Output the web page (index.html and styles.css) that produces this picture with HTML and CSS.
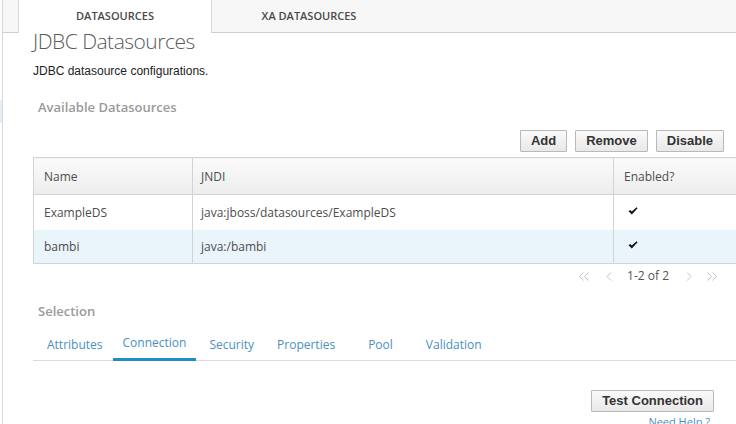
FILE: index.html
```html
<!DOCTYPE html>
<html>
<head>
<meta charset="utf-8">
<link rel="stylesheet" href="styles.css">
</head>
<body>
<div class="page">
  <div class="side-patch"></div>
  <div class="tabstrip">
    <div class="tab-stub"></div>
    <div class="tab active">DATASOURCES</div>
    <div class="tab">XA DATASOURCES</div>
  </div>
  <div class="content">
    <h1 class="title">JDBC Datasources</h1>
    <p class="desc">JDBC datasource configurations.</p>
    <h2 class="section">Available Datasources</h2>
    <div class="toolbar">
      <button class="btn">Add</button>
      <button class="btn">Remove</button>
      <button class="btn">Disable</button>
    </div>
    <table class="grid">
      <colgroup>
        <col class="c-name"><col class="c-jndi"><col class="c-enabled">
      </colgroup>
      <thead>
        <tr><th>Name</th><th>JNDI</th><th>Enabled?</th></tr>
      </thead>
      <tbody>
        <tr><td>ExampleDS</td><td>java:jboss/datasources/ExampleDS</td><td><svg class="check" width="10" height="8" viewBox="0 0 10 8"><path d="M0.6 4.2 L2.2 2.9 L3.8 4.6 L8.6 0.3 L9.6 1.3 L3.8 7.6 Z" fill="#111"/></svg></td></tr>
        <tr class="sel"><td>bambi</td><td>java:/bambi</td><td><svg class="check" width="10" height="8" viewBox="0 0 10 8"><path d="M0.6 4.2 L2.2 2.9 L3.8 4.6 L8.6 0.3 L9.6 1.3 L3.8 7.6 Z" fill="#111"/></svg></td></tr>
      </tbody>
    </table>
    <div class="pager">
      <svg class="pg first" width="10" height="9" viewBox="0 0 10 9"><polyline points="4.5,0.5 0.5,4.5 4.5,8.5" fill="none" stroke="#c4c4c4"/><polyline points="9.5,0.5 5.5,4.5 9.5,8.5" fill="none" stroke="#c4c4c4"/></svg>
      <svg class="pg prev" width="6" height="9" viewBox="0 0 6 9"><polyline points="5,0.5 1,4.5 5,8.5" fill="none" stroke="#c4c4c4"/></svg>
      <span class="pg-text">1-2 of 2</span>
      <svg class="pg next" width="6" height="9" viewBox="0 0 6 9"><polyline points="1,0.5 5,4.5 1,8.5" fill="none" stroke="#c4c4c4"/></svg>
      <svg class="pg last" width="10" height="9" viewBox="0 0 10 9"><polyline points="0.5,0.5 4.5,4.5 0.5,8.5" fill="none" stroke="#c4c4c4"/><polyline points="5.5,0.5 9.5,4.5 5.5,8.5" fill="none" stroke="#c4c4c4"/></svg>
    </div>
    <h2 class="section sel-title">Selection</h2>
    <div class="subtabs">
      <div class="subtab t1">Attributes</div>
      <div class="subtab t2 active">Connection</div>
      <div class="subtab t3">Security</div>
      <div class="subtab t4">Properties</div>
      <div class="subtab t5">Pool</div>
      <div class="subtab t6">Validation</div>
    </div>
    <div class="actions">
      <button class="btn">Test Connection</button>
    </div>
    <div class="help">Need Help ?</div>
  </div>
</div>
</body>
</html>
```
FILE: styles.css
```css
html, body {
  margin: 0;
  padding: 0;
  background: #fff;
}
body {
  width: 736px;
  height: 424px;
  overflow: hidden;
  font-family: "Open Sans", "Liberation Sans", sans-serif;
  color: #4d4d4d;
}
.page {
  position: relative;
  margin-left: 2px;
  border-left: 1px solid #d9d9d9;
  height: 424px;
}
.side-patch {
  position: absolute;
  left: -3px;
  top: 100px;
  width: 2px;
  height: 23px;
  background: #e3eef6;
}
.tabstrip {
  display: flex;
  height: 32px;
  background: #f7f7f7;
  border-bottom: 1px solid #cfcfcf;
}
.tab-stub {
  width: 15px;
}
.tab {
  width: 194px;
  box-sizing: border-box;
  text-align: center;
  line-height: 32px;
  font-size: 11px;
  font-weight: 600;
  color: #4a4a4a;
}
.tab.active {
  background: #fff;
  border-left: 1px solid #dcdcdc;
  border-right: 1px solid #dcdcdc;
  height: 33px;
}
.content {
  padding: 0 12px 0 30px;
}
.title {
  margin: -3px 0 0;
  font-size: 21px;
  line-height: 22px;
  font-weight: 300;
  letter-spacing: -0.5px;
  color: #5a5a5a;
}
.desc {
  margin: 12px 0 0;
  font-family: "Liberation Sans", Arial, sans-serif;
  font-size: 12px;
  line-height: 14px;
  color: #222;
}
.section {
  margin: 21px 0 0;
  padding-left: 5px;
  font-size: 13px;
  line-height: 16px;
  font-weight: 600;
  color: #9a9a9a;
}
.toolbar {
  display: flex;
  justify-content: flex-end;
  gap: 8px;
  margin-top: 15px;
}
.btn {
  height: 22px;
  padding: 0 10px;
  margin: 0;
  font-family: "Liberation Sans", Arial, sans-serif;
  font-size: 13px;
  font-weight: bold;
  color: #333;
  background: linear-gradient(#fafafa, #e8e8e8);
  border: 1px solid #b9b9b9;
  border-radius: 1px;
  line-height: 20px;
}
.grid {
  margin-top: 5px;
  width: 720px;
  border-collapse: collapse;
  table-layout: fixed;
  border: 1px solid #d3d3d3;
  font-size: 12px;
  color: #4d4d4d;
}
.c-name { width: 159px; }
.c-jndi { width: 421px; }
.c-enabled { width: 140px; }
.grid th {
  height: 37px;
  padding: 0 0 0 10px;
  text-align: left;
  font-weight: 400;
  background: linear-gradient(#fbfbfb, #ededed);
  border: 1px solid #d3d3d3;
  box-sizing: border-box;
}
.grid td {
  height: 35px;
  padding: 0 0 0 10px;
  border-left: 1px solid #d3d3d3;
  border-right: 1px solid #d3d3d3;
  box-sizing: border-box;
}
.grid tr.sel td {
  height: 34px;
}
.grid td:nth-child(2), .grid th:nth-child(2) {
  padding-left: 8px;
}
.grid tr.sel td {
  background: #eaf4fb;
}
.check {
  display: block;
  margin: -3px 0 0 4px;
}
.pager {
  display: flex;
  justify-content: flex-end;
  align-items: center;
  height: 24px;
  padding-right: 7px;
}
.pg { display: block; }
.prev { margin-left: 17px; }
.pg-text {
  margin-left: 15px;
  font-size: 12px;
  line-height: 16px;
  color: #555;
}
.next { margin-left: 17px; }
.last { margin-left: 15px; }
.sel-title {
  margin-top: 15px;
}
.subtabs {
  display: flex;
  margin: 9px -12px 0 0;
  border-bottom: 1px solid #dcdcdc;
}
.subtab {
  padding: 9px 10px 5px;
  line-height: 16px;
  font-size: 12px;
  color: #4a90c0;
  border-bottom: 3px solid transparent;
  margin-bottom: -1px;
}
.subtab.active {
  border-bottom-color: #1f8fc6;
  padding-top: 7px;
  padding-bottom: 7px;
}
.t1 { margin-left: 4px; }
.t2 { margin-left: 0; }
.t3 { margin-left: 3px; }
.t4 { margin-left: 3px; }
.t5 { margin-left: 13px; }
.t6 { margin-left: 13px; }
.actions {
  display: flex;
  justify-content: flex-end;
  margin: 29px 10px 0 0;
}
.help {
  margin: 3px 14px 0 0;
  text-align: right;
  font-size: 11px;
  line-height: 14px;
  color: #4a90c0;
}
```
